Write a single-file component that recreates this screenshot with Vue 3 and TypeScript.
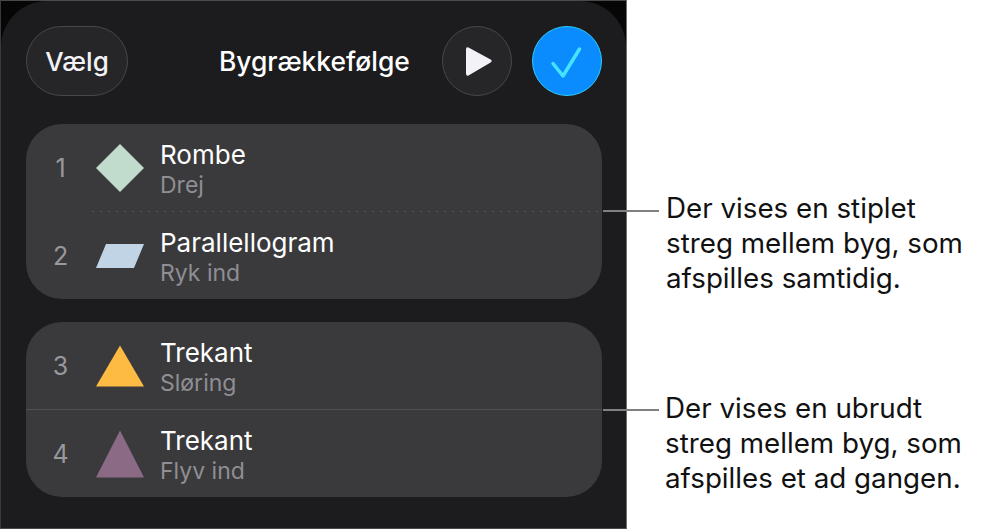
<script setup lang="ts">
type Shape = "diamond" | "para" | "triUp" | "tri";

interface Build {
  n: number;
  shape: Shape;
  name: string;
  effect: string;
}

const groups: { id: string; divider: string; rows: Build[] }[] = [
  {
    id: "a",
    divider: "dotted",
    rows: [
      { n: 1, shape: "diamond", name: "Rombe", effect: "Drej" },
      { n: 2, shape: "para", name: "Parallellogram", effect: "Ryk ind" },
    ],
  },
  {
    id: "b",
    divider: "solid",
    rows: [
      { n: 3, shape: "triUp", name: "Trekant", effect: "Sløring" },
      { n: 4, shape: "tri", name: "Trekant", effect: "Flyv ind" },
    ],
  },
];

const shapes: Record<Shape, { points: string; fill: string }> = {
  diamond: { points: "24,0 48,24 24,48 0,24", fill: "#c1dccd" },
  para: { points: "10,12 48,12 38,36 0,36", fill: "#c1d4e6" },
  triUp: { points: "24,3.5 48,44.5 0,44.5", fill: "#fdbb44" },
  tri: { points: "24,0.5 48,47.5 0,47.5", fill: "#8a6a85" },
};

const notes = [
  { id: "dashed", lines: ["Der vises en stiplet", "streg mellem byg, som", "afspilles samtidig."] },
  { id: "solid", lines: ["Der vises en ubrudt", "streg mellem byg, som", "afspilles et ad gangen."] },
];
</script>

<template>
  <div class="page">
    <div class="device">
      <div class="sheet">
        <header class="bar">
          <button class="pill">Vælg</button>
          <h1 class="title">Bygrækkefølge</h1>
          <button class="round play" aria-label="Afspil">
            <svg width="70" height="70" viewBox="0 0 70 70">
              <path
                d="M26.5 21.6 L48.6 33.6 Q51 35 48.6 36.4 L26.5 49.4 Q24 50.6 24 47.6 V23.4 Q24 20.4 26.5 21.6 Z"
                fill="#f2f2f7"
              />
            </svg>
          </button>
          <button class="round done" aria-label="Færdig">
            <svg width="70" height="70" viewBox="0 0 70 70">
              <path
                d="M21 37.5 L31 50 L47.5 23"
                fill="none"
                stroke="#45e3ff"
                stroke-width="3.5"
                stroke-linecap="round"
                stroke-linejoin="round"
              />
            </svg>
          </button>
        </header>

        <section v-for="group in groups" :key="group.id" class="group">
          <template v-for="(row, i) in group.rows" :key="row.n">
            <div v-if="i > 0" class="divider" :class="group.divider"></div>
            <div class="row">
              <span class="num">{{ row.n }}</span>
              <svg class="shape" width="48" height="48" viewBox="0 0 48 48">
                <polygon :points="shapes[row.shape].points" :fill="shapes[row.shape].fill" />
              </svg>
              <div class="labels">
                <div class="name">{{ row.name }}</div>
                <div class="effect">{{ row.effect }}</div>
              </div>
            </div>
          </template>
        </section>
      </div>
    </div>

    <aside class="notes">
      <div v-for="note in notes" :key="note.id" class="note" :class="note.id">
        <span class="leader"></span>
        <div v-for="line in note.lines" :key="line">{{ line }}</div>
      </div>
    </aside>
  </div>
</template>

<style>
html,
body {
  margin: 0;
  background: #fff;
}
</style>

<style scoped>
.page {
  display: flex;
  width: 987px;
  height: 529px;
  overflow: hidden;
  font-family: Inter, "Liberation Sans", sans-serif;
}

.device {
  box-sizing: border-box;
  flex: 0 0 627px;
  height: 529px;
  background: radial-gradient(12px 3px at 58px 0, #1d5f9c, transparent), #060606;
  border: 1px solid #6f6f72;
  border-top-color: #4a4a4c;
  border-bottom-color: #4a4a4c;
  border-left-color: #3a3a3c;
}

.sheet {
  box-sizing: border-box;
  height: 100%;
  padding: 25px 24px 0 25px;
  background: #1c1c1e;
  border-radius: 46px 46px 0 0;
}

.bar {
  display: flex;
  align-items: center;
  height: 70px;
  margin-bottom: 28px;
}

.pill {
  box-sizing: border-box;
  width: 102px;
  height: 70px;
  padding: 0;
  color: #f2f2f7;
  font: 500 26px Inter, "Liberation Sans", sans-serif;
  background: #262628;
  border: 1.5px solid #48484a;
  border-radius: 35px;
}

.title {
  margin: 0 auto 0 91px;
  color: #fff;
  font-size: 26.4px;
  font-weight: 500;
}

.round {
  box-sizing: border-box;
  position: relative;
  width: 70px;
  height: 70px;
  padding: 0;
  border-radius: 50%;
}

.round svg {
  position: absolute;
  left: -1.5px;
  top: -1.5px;
}

.play {
  margin-right: 20px;
  background: #262628;
  border: 1.5px solid #48484a;
}

.done {
  background: #0a8cff;
  border: 1.5px solid #2ccdfb;
}

.group {
  width: 576px;
  margin-bottom: 23px;
  background: #3a3a3c;
  border-radius: 36px;
}

.row {
  display: flex;
  align-items: center;
  height: 87px;
}

.num {
  flex: 0 0 70px;
  color: #98989d;
  font-size: 25px;
  text-align: center;
  padding-right: 1px;
  box-sizing: border-box;
}

.shape {
  flex: none;
  margin-right: 16px;
}

.labels {
  padding-top: 5px;
}

.name {
  color: #fff;
  font-size: 26px;
  line-height: 30px;
}

.effect {
  color: #8e8e93;
  font-size: 23px;
  line-height: 31px;
}

.divider {
  height: 1px;
}

.divider.dotted {
  margin-left: 66px;
  background: repeating-linear-gradient(to right, #58585b 0 2px, transparent 2px 8px);
}

.divider.solid {
  background: #505053;
}

.notes {
  display: flex;
  flex-direction: column;
  gap: 95px;
  padding: 191px 0 0 39px;
  color: #111;
  font-size: 27.75px;
  line-height: 35px;
  white-space: nowrap;
}

.note {
  position: relative;
}

.note.solid {
  margin-left: -1px;
}

.leader {
  position: absolute;
  left: -63px;
  width: 56px;
  height: 2px;
  top: 19px;
  background: #808080;
}

.note.solid .leader {
  left: -62px;
  top: 18px;
}
</style>
